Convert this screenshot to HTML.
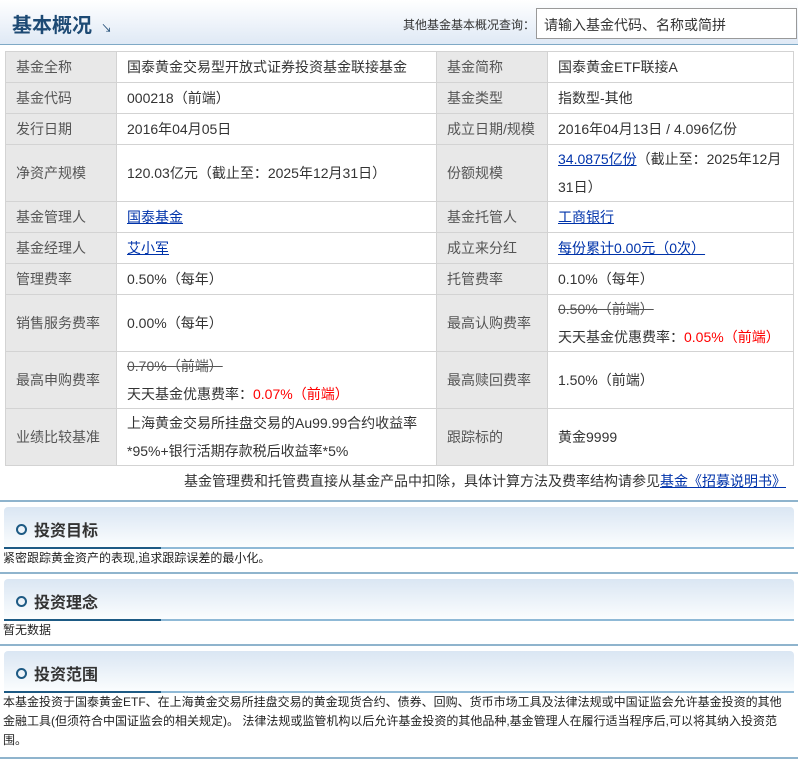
<!DOCTYPE html>
<html><head><meta charset="utf-8"><style>
*{margin:0;padding:0;box-sizing:border-box}
body{width:798px;height:761px;overflow:hidden;background:#fff;font-family:"Liberation Sans","Noto Sans CJK SC",sans-serif;font-size:14px;color:#333;position:relative}
.hd{position:absolute;left:0;top:0;width:798px;height:45px;background:linear-gradient(#fff,#dfe9f5);border-bottom:1px solid #7fa9c6}
.hd h1{position:absolute;left:12px;top:9px;font-size:20px;color:#1d4a74;font-weight:bold;letter-spacing:0}
.hd .ar{position:absolute;left:101px;top:20px;font-size:11px;color:#1d4a74}
.hd .q{position:absolute;left:403px;top:16px;font-size:12px;color:#333;white-space:nowrap}
.hd .inp{position:absolute;left:536px;top:8px;width:261px;height:31px;border:1px solid #999;background:#fff;font-size:14px;color:#333;padding:6px 0 0 7px}
table{position:absolute;left:5px;top:51px;border-collapse:collapse;width:789px}
td{border:1px solid #d3d3d3;padding:0 10px;line-height:22px;font-size:14px}
td.l{background:#e8e8e8;color:#555;width:111px}
td.v{width:320px}
a{color:#0033aa;text-decoration:underline}
.del{text-decoration:line-through;color:#555}
.red{color:#f00}
.note{position:absolute;right:12px;top:471px;font-size:14px}
.line{position:absolute;left:0;width:798px;height:2px;background:#8fb4cd}
.sec{position:absolute;left:4px;width:790px;height:42px;background:linear-gradient(#dae6f3,#fbfdfe);border-radius:4px 4px 0 0;border-bottom:2px solid #8fb9d6}
.sec:after{content:"";position:absolute;left:0;bottom:-2px;width:157px;height:2px;background:#1d5a84}
.sec .o{position:absolute;left:12px;top:17px;width:11px;height:11px;border:2px solid #1d5a84;border-radius:50%}
.sec .t{position:absolute;left:30px;top:10px;font-size:16px;font-weight:bold;color:#333}
.txt{position:absolute;left:3px;font-size:12px;line-height:19px;color:#222;width:790px}
</style></head><body>
<div class="hd"><h1>基本概况</h1><span class="ar">↘</span><span class="q">其他基金基本概况查询：</span><div class="inp">请输入基金代码、名称或简拼</div></div>
<table>
<tr style="height:31px"><td class="l">基金全称</td><td class="v">国泰黄金交易型开放式证券投资基金联接基金</td><td class="l">基金简称</td><td>国泰黄金ETF联接A</td></tr>
<tr style="height:31px"><td class="l">基金代码</td><td>000218（前端）</td><td class="l">基金类型</td><td>指数型-其他</td></tr>
<tr style="height:31px"><td class="l">发行日期</td><td>2016年04月05日</td><td class="l">成立日期/规模</td><td>2016年04月13日 / 4.096亿份</td></tr>
<tr style="height:57px"><td class="l">净资产规模</td><td>120.03亿元（截止至：2025年12月31日）</td><td class="l">份额规模</td><td style="line-height:28px"><a>34.0875亿份</a>（截止至：2025年12月31日）</td></tr>
<tr style="height:31px"><td class="l">基金管理人</td><td><a>国泰基金</a></td><td class="l">基金托管人</td><td><a>工商银行</a></td></tr>
<tr style="height:31px"><td class="l">基金经理人</td><td><a>艾小军</a></td><td class="l">成立来分红</td><td><a>每份累计0.00元（0次）</a></td></tr>
<tr style="height:31px"><td class="l">管理费率</td><td>0.50%（每年）</td><td class="l">托管费率</td><td>0.10%（每年）</td></tr>
<tr style="height:57px"><td class="l">销售服务费率</td><td>0.00%（每年）</td><td class="l">最高认购费率</td><td style="line-height:28px"><span class="del">0.50%（前端）</span><br>天天基金优惠费率：<span class="red">0.05%（前端）</span></td></tr>
<tr style="height:57px"><td class="l">最高申购费率</td><td style="line-height:28px"><span class="del">0.70%（前端）</span><br>天天基金优惠费率：<span class="red">0.07%（前端）</span></td><td class="l">最高赎回费率</td><td>1.50%（前端）</td></tr>
<tr style="height:57px"><td class="l">业绩比较基准</td><td style="line-height:28px">上海黄金交易所挂盘交易的Au99.99合约收益率*95%+银行活期存款税后收益率*5%</td><td class="l">跟踪标的</td><td>黄金9999</td></tr>
</table>
<div class="note">基金管理费和托管费直接从基金产品中扣除，具体计算方法及费率结构请参见<a>基金《招募说明书》</a></div>
<div class="line" style="top:500px"></div>
<div class="sec" style="top:507px"><span class="o"></span><span class="t">投资目标</span></div>
<div class="txt" style="top:549px">紧密跟踪黄金资产的表现,追求跟踪误差的最小化。</div>
<div class="line" style="top:572px"></div>
<div class="sec" style="top:579px"><span class="o"></span><span class="t">投资理念</span></div>
<div class="txt" style="top:621px">暂无数据</div>
<div class="line" style="top:644px"></div>
<div class="sec" style="top:651px"><span class="o"></span><span class="t">投资范围</span></div>
<div class="txt" style="top:693px">本基金投资于国泰黄金ETF、在上海黄金交易所挂盘交易的黄金现货合约、债券、回购、货币市场工具及法律法规或中国证监会允许基金投资的其他金融工具(但须符合中国证监会的相关规定)。 法律法规或监管机构以后允许基金投资的其他品种,基金管理人在履行适当程序后,可以将其纳入投资范围。</div>
<div class="line" style="top:757px"></div>
</body></html>
